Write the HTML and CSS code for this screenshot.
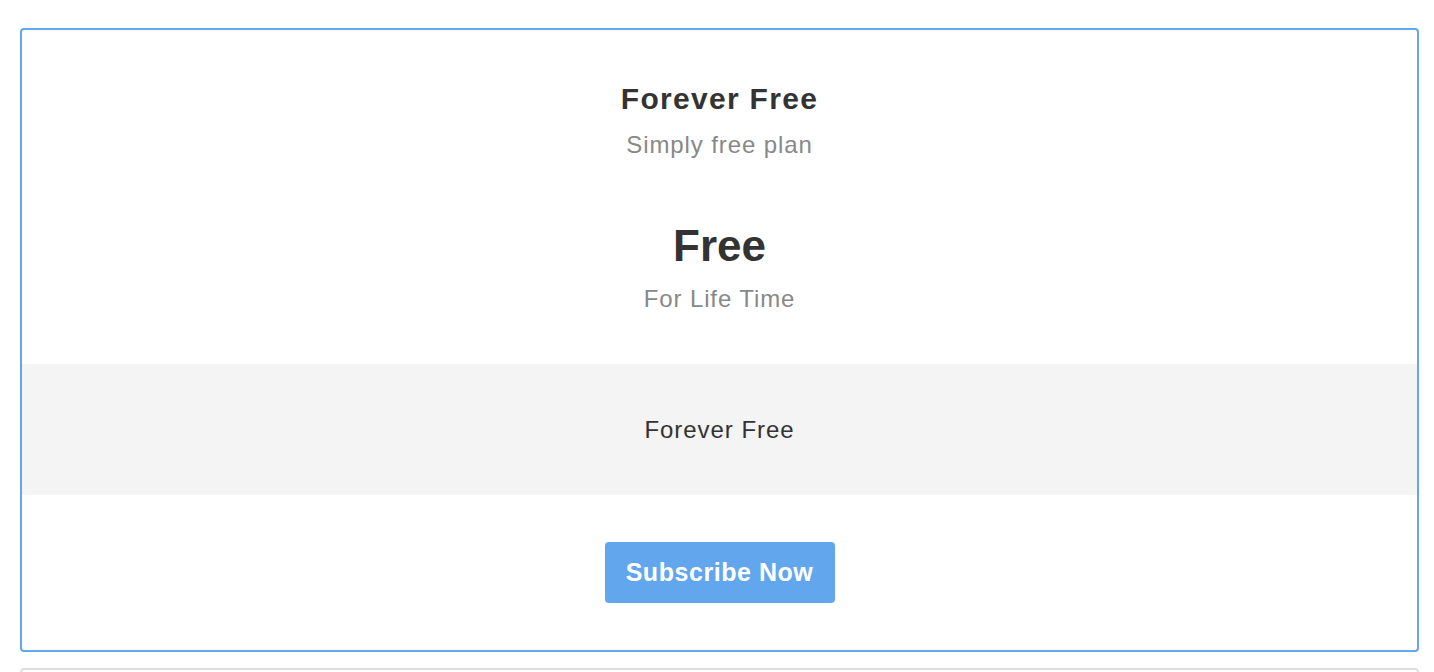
FILE: index.html
```html
<!DOCTYPE html>
<html>
<head>
<meta charset="utf-8">
<link rel="stylesheet" href="styles.css">
</head>
<body>
<div class="page">
  <div class="card active">
    <div class="head">
      <div class="title">Forever Free</div>
      <div class="sub">Simply free plan</div>
      <div class="price">Free</div>
      <div class="sub">For Life Time</div>
    </div>
    <div class="band">Forever Free</div>
    <div class="foot">
      <button class="btn">Subscribe Now</button>
    </div>
  </div>
  <div class="card next"></div>
</div>
</body>
</html>
```
FILE: styles.css
```css
html, body { margin: 0; padding: 0; background: #fff; }
body { font-family: "Liberation Sans", Arial, sans-serif; color: #333; }
.page { padding: 28px 15px 0 20px; display: flex; flex-direction: column; gap: 16px; }
.card { border: 2px solid #62a6ee; border-radius: 4px; box-sizing: border-box; }
.card.next { border-color: #dedede; height: 120px; }
.head { display: flex; flex-direction: column; align-items: center; padding: 51px 0 50px; }
.title { font-size: 30px; font-weight: bold; line-height: 36px; letter-spacing: 1.3px; }
.sub { font-size: 24px; line-height: 30px; color: #888; margin-top: 13px; letter-spacing: 0.9px; }
.price { font-size: 44px; font-weight: bold; line-height: 50px; margin-top: 61px; }
.band { background: #f4f4f4; height: 131px; display: flex; align-items: center; justify-content: center; font-size: 24px; letter-spacing: 0.95px; }
.foot { display: flex; justify-content: center; padding: 47px 0; }
.btn { width: 230px; height: 61px; border: 0; border-radius: 4px; background: #62a6ee; color: #fff; font-family: inherit; font-size: 25px; font-weight: bold; letter-spacing: 0.55px; cursor: pointer; padding: 0; }
```
